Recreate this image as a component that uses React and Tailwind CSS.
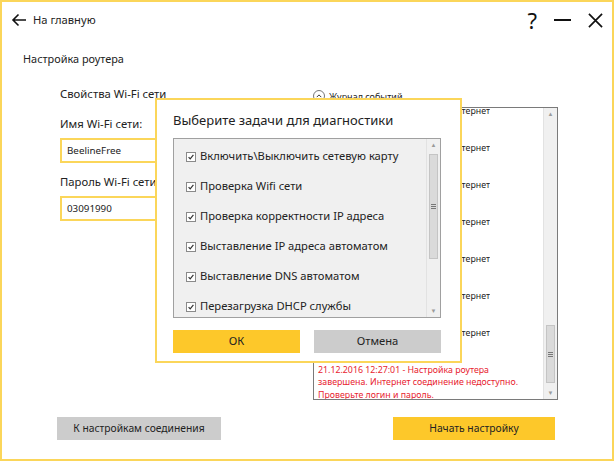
import React from 'react';

const font = { fontFamily: '"Noto Sans", "Open Sans", sans-serif' };

const tasks = [
    'Включить\\Выключить сетевую карту',
    'Проверка Wifi сети',
    'Проверка корректности IP адреса',
    'Выставление IP адреса автоматом',
    'Выставление DNS автоматом',
    'Перезагрузка DHCP службы'
];

const logTimes = ['12:26:41', '12:26:44', '12:26:47', '12:26:50', '12:26:53', '12:26:56', '12:26:59'];

const Check = () => (
    <span className="w-[10px] h-[10px] border border-[#8a8a8a] bg-white flex items-center justify-center shrink-0">
        <svg viewBox="0 0 10 10" className="w-[8px] h-[8px]">
            <path d="M2 5.2 L4 7.4 L8 2.4" fill="none" stroke="#333" strokeWidth="1.5" />
        </svg>
    </span>
);

const Scrollbar = ({ thumbTop, thumbHeight }) => (
    <div className="absolute top-0 right-0 bottom-0 w-[14px] bg-[#f0f0f0] border-l border-[#e2e2e2]">
        <span className="absolute top-[3px] left-0 right-0 text-center text-[6px] leading-none text-[#9a9a9a]">▲</span>
        <div
            className="absolute left-[2px] right-[2px] bg-[#dadada] border border-[#c4c4c4] flex items-center justify-center"
            style={{ top: thumbTop, height: thumbHeight }}
        >
            <div className="flex flex-col gap-[1px]">
                <span className="w-[5px] h-px bg-[#777]" />
                <span className="w-[5px] h-px bg-[#777]" />
                <span className="w-[5px] h-px bg-[#777]" />
            </div>
        </div>
        <span className="absolute bottom-[3px] left-0 right-0 text-center text-[6px] leading-none text-[#9a9a9a]">▼</span>
    </div>
);

export default function App() {
    return (
        <div className="w-[616px] h-[463px] bg-white relative overflow-hidden text-[#222]" style={font}>
            <div className="w-[614px] h-[461px] border-2 border-[#fbd65a] flex flex-col">
                {/* Header */}
                <div className="flex items-center justify-between h-[34px] pl-[9px] pr-[9px] pt-[2px]">
                    <div className="flex items-center gap-[6px]">
                        <svg viewBox="0 0 16 14" className="w-[16px] h-[14px]">
                            <path d="M15 7 H2 M7.5 1.5 L2 7 L7.5 12.5" fill="none" stroke="#111" strokeWidth="1.6" />
                        </svg>
                        <span className="text-[11.2px]">На главную</span>
                    </div>
                    <div className="flex items-center gap-[17px] text-[#111]">
                        <span className="text-[22px] leading-none">?</span>
                        <span className="w-[17px] h-[2px] bg-[#111]" />
                        <svg viewBox="0 0 16 16" className="w-[15px] h-[15px]">
                            <path d="M1 1 L15 15 M15 1 L1 15" stroke="#111" strokeWidth="1.8" />
                        </svg>
                    </div>
                </div>

                <p className="text-[10.9px] ml-[21px] mt-[15px]">Настройка роутера</p>

                {/* Columns */}
                <div className="flex mt-[19px] ml-[58px]">
                    <div className="w-[253px] flex flex-col">
                        <p className="text-[11.3px] leading-[16px]">Свойства Wi-Fi сети</p>
                        <p className="text-[11.3px] leading-[16px] mt-[14px]">Имя Wi-Fi сети:</p>
                        <div className="mt-[6px] h-[25px] w-[240px] border-2 border-[#fbd65a] flex items-center px-[5px] text-[9.8px]">BeelineFree</div>
                        <p className="text-[11.3px] leading-[16px] mt-[11px]">Пароль Wi-Fi сети</p>
                        <div className="mt-[6px] h-[25px] w-[240px] border-2 border-[#fbd65a] flex items-center px-[5px] text-[9.8px]">03091990</div>
                    </div>
                    <div className="w-[245px] flex flex-col">
                        <div className="flex items-center gap-[4px] h-[14px] mt-[3px]">
                            <span className="w-[12px] h-[12px] rounded-full border border-[#777] flex items-center justify-center">
                                <svg viewBox="0 0 8 8" className="w-[6px] h-[6px]">
                                    <path d="M1 5.5 L4 2.5 L7 5.5" fill="none" stroke="#333" strokeWidth="1.3" />
                                </svg>
                            </span>
                            <span className="text-[9px]">Журнал событий</span>
                        </div>
                        <div className="mt-[4px] h-[293px] border border-[#7a7a7a] relative overflow-hidden bg-white">
                            <div className="pl-[4px] text-[8.8px] leading-[12.5px] mt-[-3px]">
                                {logTimes.map((t) => (
                                    <div key={t} className="h-[36.9px] w-[172px] flex justify-end overflow-hidden whitespace-nowrap">
                                        <span className="shrink-0">21.12.2016 {t} - Нет подключения к Интернет</span>
                                    </div>
                                ))}
                                <p className="text-[#e8232f] whitespace-nowrap">
                                    21.12.2016 12:27:01 - Настройка роутера
                                    <br />
                                    завершена. Интернет соединение недоступно.
                                    <br />
                                    Проверьте логин и пароль.
                                </p>
                            </div>
                            <Scrollbar thumbTop={217} thumbHeight={58} />
                        </div>
                    </div>
                </div>

                {/* Bottom buttons */}
                <div className="flex justify-between mt-[17px] ml-[55px] mr-[57px]">
                    <button className="w-[164px] h-[23px] bg-[#cccccc] text-[10.3px]">К настройкам соединения</button>
                    <button className="w-[162px] h-[23px] bg-[#fdc82a] text-[10.3px]">Начать настройку</button>
                </div>
            </div>

            {/* Diagnostic dialog */}
            <div className="absolute left-[155px] top-[98px] w-[307px] h-[265px] bg-white border-2 border-[#fbd65a] flex flex-col pl-[16px] pr-[19px]">
                <p className="text-[13px] mt-[11px]">Выберите задачи для диагностики</p>
                <div className="mt-[7px] h-[180px] border border-[#a0a0a0] bg-[#f0f0f0] relative overflow-hidden">
                    <div className="flex flex-col pt-[9px] pl-[12px] gap-[12px]">
                        {tasks.map((t) => (
                            <div key={t} className="flex items-center gap-[4px] h-[18px]">
                                <Check />
                                <span className="text-[11.2px] whitespace-nowrap">{t}</span>
                            </div>
                        ))}
                    </div>
                    <Scrollbar thumbTop={15} thumbHeight={105} />
                </div>
                <div className="flex justify-between mt-[12px]">
                    <button className="w-[127px] h-[23px] bg-[#fdc82a] text-[11.2px]">ОК</button>
                    <button className="w-[127px] h-[23px] bg-[#cccccc] text-[11.2px]">Отмена</button>
                </div>
            </div>
        </div>
    );
}
